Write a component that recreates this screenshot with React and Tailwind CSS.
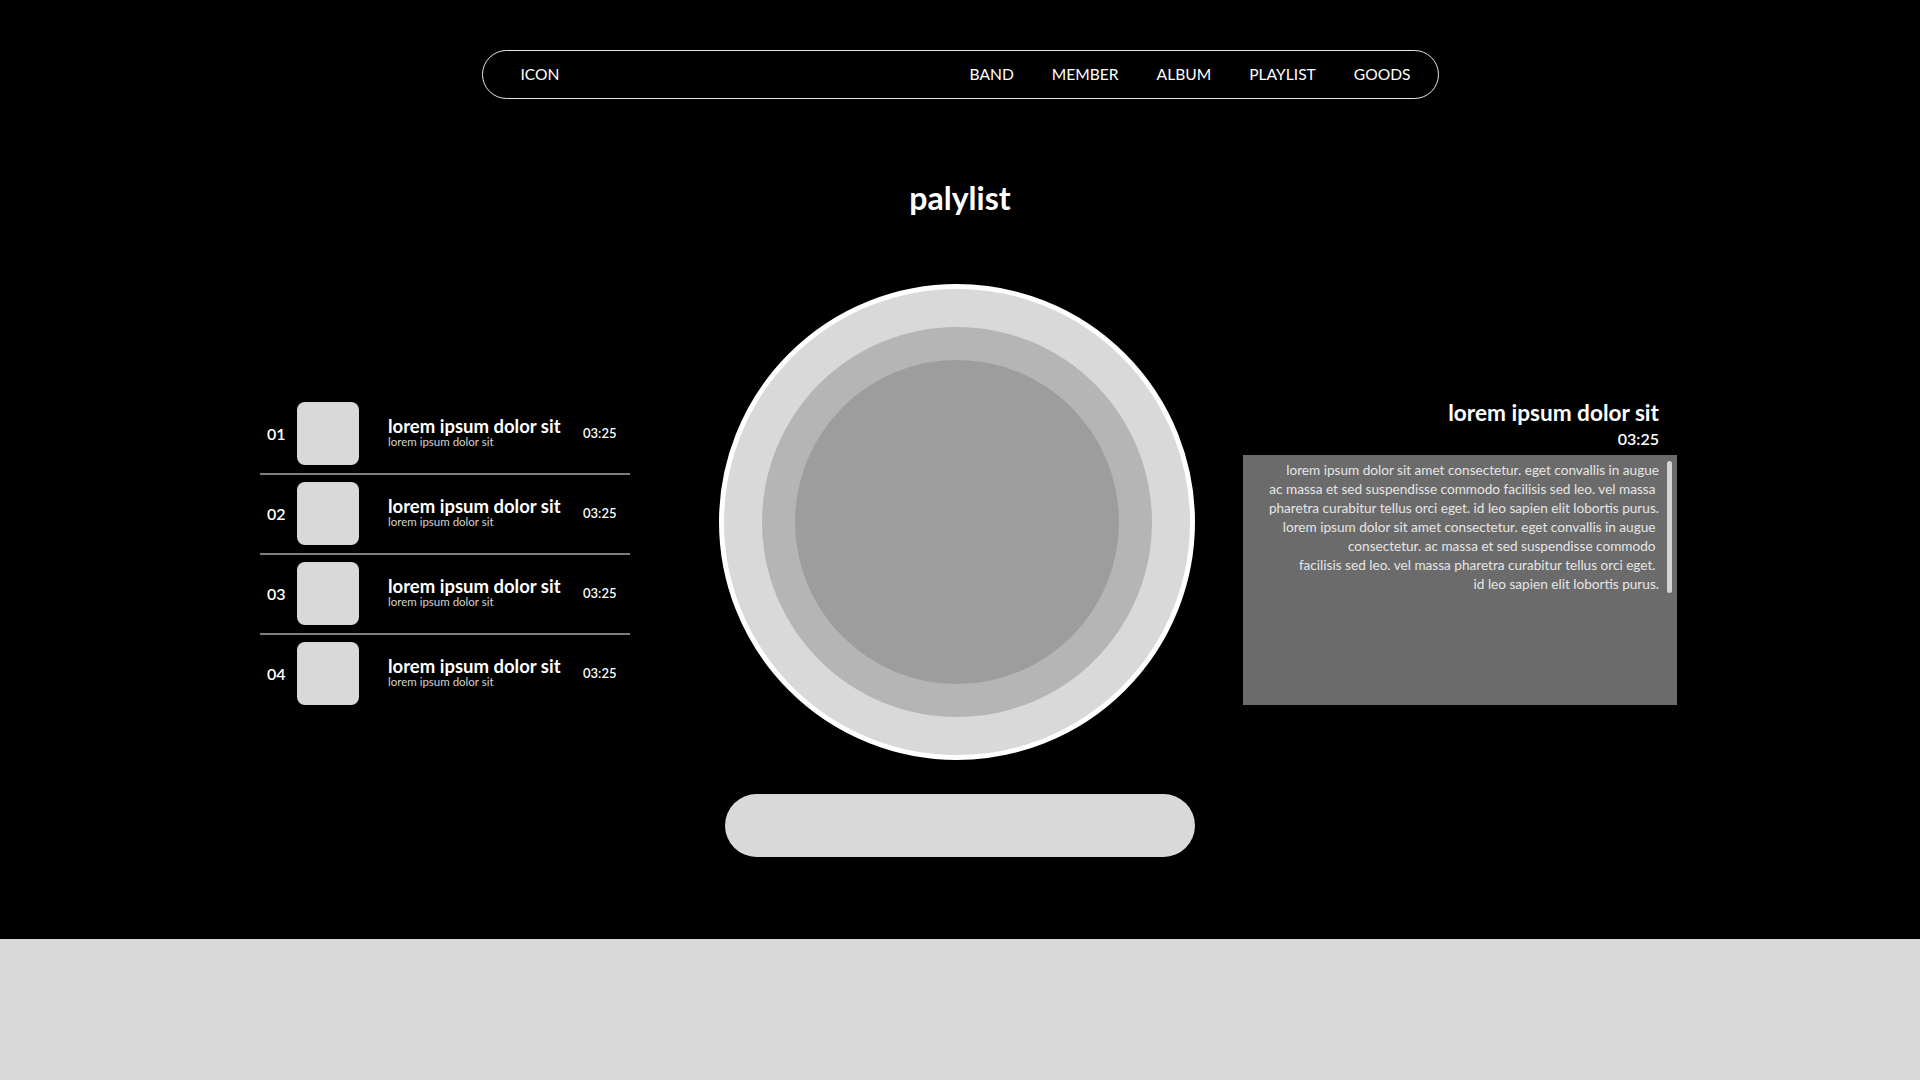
import React from 'react';

const tracks = ['01', '02', '03', '04'];

const lyrics = [
  'lorem ipsum dolor sit amet consectetur. eget convallis in augue',
  'ac massa et sed suspendisse commodo facilisis sed leo. vel massa ',
  'pharetra curabitur tellus orci eget. id leo sapien elit lobortis purus.',
  'lorem ipsum dolor sit amet consectetur. eget convallis in augue ',
  'consectetur. ac massa et sed suspendisse commodo ',
  'facilisis sed leo. vel massa pharetra curabitur tellus orci eget. ',
  'id leo sapien elit lobortis purus.',
];

const Playlist = () => {
  return (
    <div className="w-full min-h-screen bg-[#d9d9d9] font-['Lato','Noto_Sans',sans-serif]">
      <section className="w-full h-[939px] bg-black text-white flex flex-col">
        <nav className="mt-[50px] mx-auto w-[957px] h-[49px] rounded-full border border-white/90 flex items-center pl-[38px] pr-[27px] text-[15.6px]">
          <span>ICON</span>
          <ul className="ml-auto flex items-center gap-[38px]">
            <li>BAND</li>
            <li>MEMBER</li>
            <li>ALBUM</li>
            <li>PLAYLIST</li>
            <li>GOODS</li>
          </ul>
        </nav>

        <h1 className="mt-[80px] text-center text-[32px] leading-[38px] font-bold">palylist</h1>

        <div className="mt-[67px] flex items-start pl-[260px]">
          <ul className="w-[370px] mt-[111px]">
            {tracks.map((n, i) => (
              <li
                key={n}
                className={`flex items-center pl-[7px] pt-[7px] pb-[8px] ${i < 3 ? 'border-b-2 border-[#7d7d7d]' : ''}`}
              >
                <span className="w-[30px] text-[16px] font-semibold">{n}</span>
                <div className="w-[62px] h-[63px] rounded-[8px] bg-[#d9d9d9]" />
                <div className="ml-[29px] mb-[4px] w-[195px] flex flex-col">
                  <span className="text-[18.5px] leading-[20px] font-bold">lorem ipsum dolor sit</span>
                  <span className="text-[11.5px] leading-[12px] text-[#d4d4d4]">lorem ipsum dolor sit</span>
                </div>
                <span className="text-[13px] font-semibold">03:25</span>
              </li>
            ))}
          </ul>

          <div className="ml-[89px] w-[476px] flex flex-col">
            <div className="w-[476px] h-[476px] rounded-full border-[5px] border-white bg-[#d9d9d9] flex items-center justify-center">
              <div className="w-[390px] h-[390px] rounded-full bg-[#b5b5b5] flex items-center justify-center">
                <div className="w-[324px] h-[324px] rounded-full bg-[#9d9d9d]" />
              </div>
            </div>
            <div className="mt-[34px] ml-[6px] w-[470px] h-[63px] rounded-full bg-[#d9d9d9]" />
          </div>

          <div className="ml-[48px] w-[434px] mt-[115px] flex flex-col">
            <div className="pr-[18px] text-right">
              <p className="text-[22.6px] leading-[28px] font-bold">lorem ipsum dolor sit</p>
              <p className="mt-[2px] text-[16px] leading-[20px] font-semibold">03:25</p>
            </div>
            <div className="mt-[6px] h-[250px] bg-[#6b6b6b] relative pt-[6px] pr-[18px]">
              {lyrics.map((line, i) => (
                <p key={i} className="text-right whitespace-pre text-[13.6px] leading-[19px] text-[#e6e6e6]">
                  {line}
                </p>
              ))}
              <div className="absolute right-[5px] top-[6px] w-[5px] h-[132px] rounded-full bg-[#d4d4d4]" />
            </div>
          </div>
        </div>
      </section>
    </div>
  );
};

export default Playlist;
